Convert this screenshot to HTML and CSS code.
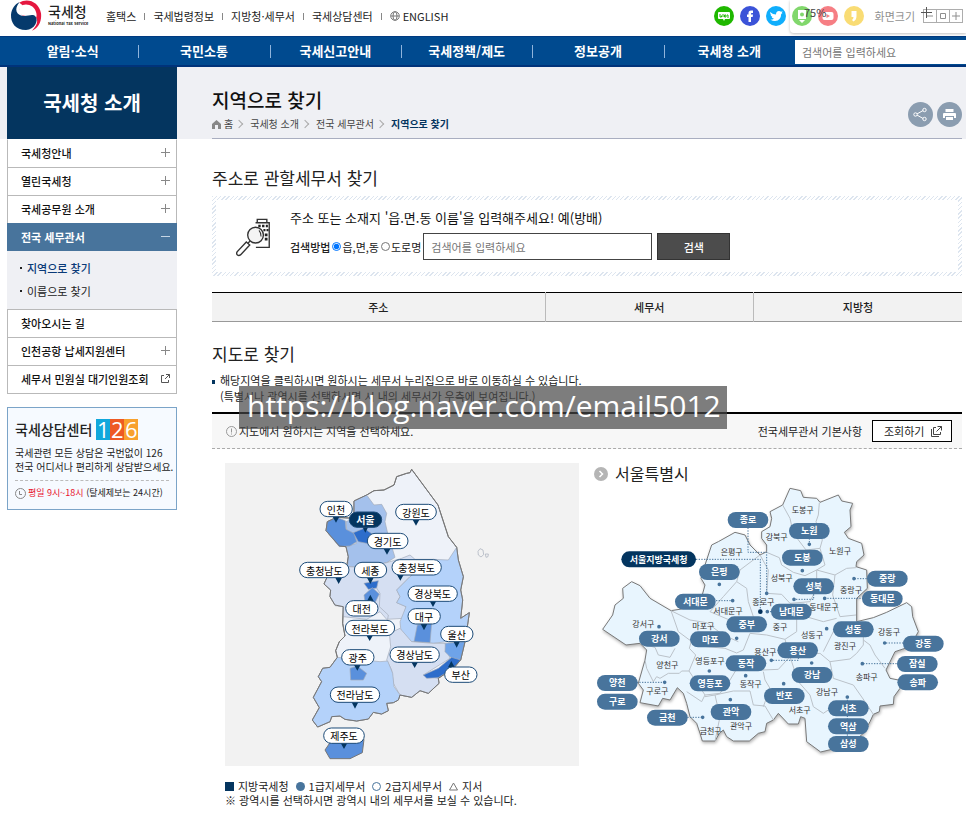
FILE: index.html
```html
<!DOCTYPE html>
<html lang="ko">
<head>
<meta charset="utf-8">
<meta name="viewport" content="width=device-width, initial-scale=1">
<title>지역으로 찾기 | 국세청</title>
<link rel="stylesheet" href="styles.css">
</head>
<body>
<header class="top">
  <a class="logo" href="#">
    <svg width="32" height="32" viewBox="0 0 96 96" aria-hidden="true">
      <path fill="#e5173f" d="M28 8C52-8 88 6 93 40C96 66 84 84 66 92C82 76 86 62 76 50C64 38 52 50 42 48C26 44 24 26 38 16Z"/>
      <path fill="#fff" d="M30 20C46 6 74 16 78 36C84 52 74 64 66 60C54 42 32 52 26 36Z"/>
      <path fill="#063a6c" d="M29 6C10 28 20 46 40 48C56 49 68 40 77 50C86 62 74 88 48 90C16 90 2 68 3 44C5 26 14 13 29 6Z"/>
    </svg>
    <span class="logo-text"><strong>국세청</strong><small>National Tax Service</small></span>
  </a>
  <ul class="util">
    <li><a href="#">홈택스</a></li>
    <li><a href="#">국세법령정보</a></li>
    <li><a href="#">지방청·세무서</a></li>
    <li><a href="#">국세상담센터</a></li>
    <li><a href="#"><svg width="10" height="10" viewBox="0 0 10 10" fill="none" stroke="#777"><circle cx="5" cy="5" r="4.3"/><ellipse cx="5" cy="5" rx="2" ry="4.3"/><path d="M1 5h8"/></svg>ENGLISH</a></li>
  </ul>
  <div class="sns">
    <a href="#" aria-label="블로그"><svg viewBox="0 0 20 20"><circle cx="10" cy="10" r="10" fill="#1fb800"/><path fill="#fff" d="M5 6h10q1 0 1 1v5q0 1-1 1h-4l-1 2-1-2H5q-1 0-1-1V7q0-1 1-1z"/><path stroke="#1fb800" fill="none" d="M6 8v3h1.500V9.500M9 8v3M10.500 9h1.500v2h-1.500zM13 9h1v3"/></svg></a>
    <a href="#" aria-label="페이스북"><svg viewBox="0 0 20 20"><circle cx="10" cy="10" r="10" fill="#3b53d8"/><path fill="#fff" d="M8.500 16V11H7V8.500h1.500V7q0-2.500 2.500-2.500h2V7h-1.300q-.7 0-.7.7v.8h2L12.700 11H11v5z"/></svg></a>
    <a href="#" aria-label="트위터"><svg viewBox="0 0 20 20"><circle cx="10" cy="10" r="10" fill="#10aefc"/><path fill="#fff" d="M4 6q3 2.500 6 2.500 0-3.500 3-3.500 1.300 0 2 .8l1.700-.5-1 1.400.8.2-1.300 1.100Q15 14.500 9 15q-2.500 0-4.500-1.200 2 0 3.500-1-2-.3-2.500-2h1Q4.500 10 4.500 8.300l1 .2Q3.700 7.500 4 6z"/></svg></a>
    <a href="#" aria-label="포스트"><svg viewBox="0 0 20 20"><circle cx="10" cy="10" r="10" fill="#2dbd0b"/><path fill="#fff" d="M6 4h8v9H6zM7 14h6l-3 3z"/><circle cx="10" cy="8.500" r="2" fill="#2dbd0b"/></svg></a>
    <a href="#" aria-label="유튜브"><svg viewBox="0 0 20 20"><circle cx="10" cy="10" r="10" fill="#f02932"/><rect x="4.500" y="6" width="11" height="8" rx="2" fill="#fff"/><path fill="#f02932" d="M8.500 8l3.500 2-3.500 2z"/></svg></a>
    <a href="#" aria-label="카카오스토리"><svg viewBox="0 0 20 20"><circle cx="10" cy="10" r="10" fill="#f5c518"/><path fill="#fff" d="M7.500 5h5v5q0 4-3 5.500L8 14q1.500-1 1.500-3h-2z"/></svg></a>
  </div>
  <div class="zoom-tools">
    <span>화면크기</span>
    <button type="button" aria-label="축소"><svg viewBox="0 0 12 12"><path d="M3 6h6"/></svg></button><button type="button" aria-label="기본"><svg viewBox="0 0 12 12"><path d="M3.500 3.500h5v5h-5z"/></svg></button><button type="button" aria-label="확대"><svg viewBox="0 0 12 12"><path d="M2 6h8M6 2v8"/></svg></button>
  </div>
  <div class="zoom-tip"><span>75%</span><svg width="12" height="12" viewBox="0 0 12 12" fill="none" stroke="#555"><path d="M0 5.500h11M5.500 0v11"/></svg></div>
</header>

<nav class="gnb">
  <ul>
    <li><a href="#">알림·소식</a></li>
    <li><a href="#">국민소통</a></li>
    <li><a href="#">국세신고안내</a></li>
    <li><a href="#">국세정책/제도</a></li>
    <li><a href="#">정보공개</a></li>
    <li><a href="#">국세청 소개</a></li>
  </ul>
  <input type="search" aria-label="통합검색" placeholder="검색어를 입력하세요">
</nav>

<div class="page">
  <aside class="side">
    <h2 class="side-title">국세청 소개</h2>
    <ul class="lnb">
      <li><a href="#">국세청안내<i class="plus"></i></a></li>
      <li><a href="#">열린국세청<i class="plus"></i></a></li>
      <li><a href="#">국세공무원 소개<i class="plus"></i></a></li>
      <li class="on"><a href="#">전국 세무관서<i class="minus"></i></a>
        <ul class="sub">
          <li><a class="cur" href="#">지역으로 찾기</a></li>
          <li><a href="#">이름으로 찾기</a></li>
        </ul>
      </li>
      <li><a href="#">찾아오시는 길</a></li>
      <li><a href="#">인천공항 납세지원센터<i class="plus"></i></a></li>
      <li><a href="#">세무서 민원실 대기인원조회<svg width="9" height="9" viewBox="0 0 9 9" fill="none" stroke="#555"><path d="M3 1.500H.5v7h7V6M5 .5h3.500V4M8.500.5L4 5"/></svg></a></li>
    </ul>
    <section class="call">
      <h3>국세상담센터
        <span class="n126"><b>1</b><b>2</b><b>6</b></span>
      </h3>
      <p>국세관련 모든 상담은 국번없이 126<br>전국 어디서나 편리하게 상담받으세요.</p>
      <p class="hours"><svg width="11" height="11" viewBox="0 0 11 11" fill="none" stroke="#888"><circle cx="5.500" cy="5.500" r="5"/><path d="M4.500 3v3.500H7"/></svg><span><em>평일 9시~18시</em> (탈세제보는 24시간)</span></p>
    </section>
  </aside>

  <main>
    <div class="head">
      <div>
        <h1>지역으로 찾기</h1>
        <ol class="crumb">
          <li><svg width="9" height="9" viewBox="0 0 9 9"><path fill="#888" d="M4.500 0L9 4v5H6V5H3v4H0V4z"/></svg>홈</li>
          <li>국세청 소개</li>
          <li>전국 세무관서</li>
          <li class="here">지역으로 찾기</li>
        </ol>
      </div>
      <div class="tools">
        <button type="button" aria-label="공유"><svg viewBox="0 0 25 25" fill="none" stroke="#fff"><path d="M8 12.500l8-4.500M8 12.500l8 4.500"/><circle cx="7.500" cy="12.500" r="1.700" fill="#8b9db0"/><circle cx="16.500" cy="8" r="1.700" fill="#8b9db0"/><circle cx="16.500" cy="17" r="1.700" fill="#8b9db0"/></svg></button>
        <button type="button" aria-label="인쇄"><svg viewBox="0 0 25 25" fill="#fff"><path d="M8.500 7h8v3h-8zM7 11h11q1 0 1 1v4h-2v-2H8v2H6v-4q0-1 1-1zM9 15h7v3H9z"/></svg></button>
      </div>
    </div>

    <h2>주소로 관할세무서 찾기</h2>
    <div class="finder">
      <svg class="finder-icon" viewBox="0 0 102 114" fill="none" stroke="#333" stroke-width="4">
        <path d="M57 14h40v72H58M62 14V4h28v10"/>
        <g fill="#222" stroke="none"><path d="M65 20h7v7h-7zM76 20h7v7h-7zM87 20h6v7h-6zM80 32h6v7h-6zM89 32h6v7h-6zM84 45h8v8h-8zM84 58h8v8h-8z"/></g>
        <circle cx="57" cy="50" r="23" fill="#f4f4f4"/><path stroke-width="3" d="M67 36q7 8 6 18"/>
        <path fill="#fff" d="M30 70l10 9-27 29q-5 3-9 0t-1-9z"/><path d="M35 74l6-7"/>
      </svg>
      <form class="finder-form">
        <p>주소 또는 소재지 '읍.면.동 이름'을 입력해주세요! 예(방배)</p>
        <div class="row">
          <strong>검색방법</strong>
          <label><input type="radio" name="how" checked>읍,면,동</label>
          <label><input type="radio" name="how">도로명</label>
          <input class="q" type="text" aria-label="검색어" placeholder="검색어를 입력하세요">
          <button type="submit">검색</button>
        </div>
      </form>
    </div>

    <table>
      <colgroup><col class="c1"><col class="c2"><col class="c2"></colgroup>
      <thead><tr><th scope="col">주소</th><th scope="col">세무서</th><th scope="col">지방청</th></tr></thead>
    </table>

    <h2 class="by-map">지도로 찾기</h2>
    <div class="guide">
      <p>해당지역을 클릭하시면 원하시는 세무서 누리집으로 바로 이동하실 수 있습니다.<br>(특별시나 광역시를 선택하시면 시 내의 세무서가 우측에 보여집니다.)</p>
      <div class="watermark">https://blog.naver.com/email5012</div>
    </div>
    <div class="bar">
      <span class="tip"><svg width="11" height="11" viewBox="0 0 11 11" fill="none" stroke="#999"><circle cx="5.500" cy="5.500" r="5"/><path d="M5.500 2.500v4M5.500 7.500v1"/></svg>지도에서 원하시는 지역을 선택하세요.</span>
      <span>전국세무관서 기본사항</span>
      <a class="go" href="#">조회하기<svg width="13" height="13" viewBox="0 0 13 13" fill="none" stroke="#444"><path d="M6 2.500H3.500v7h7V7M7.500 1.500h4v4M11.500 1.500L6.500 6.500M1.500 4v7.500H9"/></svg></a>
    </div>

    <div class="maps">
      <section class="korea">
        <svg class="map" viewBox="15 9 1062 909" role="group" aria-label="전국 지도">
          <defs>
            <rect id="k2" x="-48" y="-23" width="97" height="46" rx="23"/>
            <rect id="k3" x="-61" y="-23" width="122" height="46" rx="23"/>
            <rect id="k4" x="-74" y="-23" width="148" height="46" rx="23"/>
          </defs>
          <g class="land">
            <path class="coast" d="M575 28L654 135 685 230 710 262 715 300 730 350 722 390 728 420 722 475 748 458 742 500 735 545 722 600 700 625 655 655 657 670 625 700 600 692 575 712 540 705 535 720 520 728 500 730 505 752 485 762 460 757 445 777 410 783 375 778 360 768 335 770 330 785 293 801 277 780 298 743 280 712 305 665 295 650 308 625 330 622 352 592 347 572 358 545 375 528 368 490 370 440 345 435 330 410 332 390 312 372 322 350 380 320 385 290 378 260 358 258 318 212 322 185 350 172 402 175 402 123 440 105 462 92 492 90 522 75 530 50 560 40 570 38Z"/>
            <path fill="#a4c1ec" d="M402 123L440 105 462 135 485 133 500 160 495 185 503 220 525 292 500 308 430 322 383 320 385 290 378 260 410 250 380 210 378 185 402 175Z"/>
            <path fill="#5a90dc" d="M318 212L322 185 350 172 376 182 378 208 402 220 410 245 390 258 358 260Z"/>
            <path fill="#2d6dcb" d="M400 218L432 205 457 222 450 252 415 245Z"/>
            <path fill="#d5dff2" d="M383 320L430 322 500 308 545 295 570 285 585 298 640 298 570 350 530 390 540 410 530 428 558 440 550 475 500 478 480 455 440 478 370 470 368 440 345 437 330 410 332 390 312 372 322 350Z"/>
            <path fill="none" d="M470 384L480 400 478 440 505 465 503 478"/>
            <path fill="#b4d2fa" d="M710 262L685 300 640 298 570 350 530 390 540 410 530 428 558 440 540 485 543 515 575 545 640 550 680 545 735 545 748 458 722 475 728 420 722 390 730 350 715 300Z"/>
            <path fill="#5a90dc" d="M592 495L635 490 630 548 582 545Z"/>
            <path fill="#d5dff2" d="M508 520L540 505 575 545 640 550 675 550 690 595 610 645 655 655 657 670 625 700 600 692 575 712 540 705 520 670 515 630 500 600 512 560Z"/>
            <path fill="#6ea3e9" d="M676 550L735 545 722 600 695 595 675 575Z"/>
            <path fill="#2d6dcb" d="M610 645L655 625 695 592 722 600 700 625 655 653 620 655Z"/>
            <path fill="#b4d2fa" d="M352 592L480 605 503 603 518 640 522 680 540 705 535 720 520 728 500 730 505 752 485 762 460 757 445 777 410 783 375 778 360 768 335 770 330 785 293 801 277 780 298 743 280 712 305 665 295 650 308 625 330 622Z"/>
            <path fill="#5a90dc" d="M390 625L412 618 440 640 430 660 392 660Z"/>
            <path fill="#2d6dcb" d="M432 370L475 362 470 384 445 388Z"/>
            <path fill="#5a90dc" d="M432 405L457 383 478 402 465 428 435 425Z"/>
            <path class="coast jeju" d="M315 870L330 848 432 838 427 878 390 896 330 896Z"/>
            <path class="coast outline" d="M575 28L654 135 685 230 710 262 715 300 730 350 722 390 728 420 722 475 748 458 742 500 735 545 722 600 700 625 655 655 657 670 625 700 600 692 575 712 540 705 535 720 520 728 500 730 505 752 485 762 460 757 445 777 410 783 375 778 360 768 335 770 330 785 293 801 277 780 298 743 280 712 305 665 295 650 308 625 330 622 352 592 347 572 358 545 375 528 368 490 370 440 345 435 330 410 332 390 312 372 322 350 380 320 385 290 378 260 358 258 318 212 322 185 350 172 402 175 402 123 440 105 462 92 492 90 522 75 530 50 560 40 570 38Z"/>
            <path fill="#f2f2f2" d="M774 274l6-8 9 4 2 14-8 7-8-6zM796 282h9l-1 8-6 2z"/>
          </g>
          <path class="tails" d="M338 170h20l-10 18zM426 198h20l-10 20zM491 266h20l-10 18zM578 179h20l-10 18zM346 353h20l-10 19zM441 353h20l-10 19zM531 344h20l-10 18zM629 423h20l-10 18zM441 423h20l-10-19zM602 492h20l-10 19zM439 526h20l-10 17zM700 544h20l-10 19zM402 614h20l-10 18zM574 606h20l-10 18zM684 622h20l-10-19zM395 727h20l-10 19zM362 849h20l-10 18z"/>
          <g class="pins">
            <a href="#" transform="translate(348 147)"><use href="#k2"/><text>인천</text></a>
            <a href="#" class="cur" transform="translate(436 179)"><use href="#k2"/><text>서울</text></a>
            <a href="#" transform="translate(503 243)"><use href="#k3"/><text>경기도</text></a>
            <a href="#" transform="translate(588 156)"><use href="#k3"/><text>강원도</text></a>
            <a href="#" transform="translate(313 330)"><use href="#k4"/><text>충청남도</text></a>
            <a href="#" transform="translate(451 330)"><use href="#k2"/><text>세종</text></a>
            <a href="#" transform="translate(590 322)"><use href="#k4"/><text>충청북도</text></a>
            <a href="#" transform="translate(638 401)"><use href="#k4"/><text>경상북도</text></a>
            <a href="#" transform="translate(425 445)"><use href="#k2"/><text>대전</text></a>
            <a href="#" transform="translate(612 469)"><use href="#k2"/><text>대구</text></a>
            <a href="#" transform="translate(450 504)"><use href="#k4"/><text>전라북도</text></a>
            <a href="#" transform="translate(710 522)"><use href="#k2"/><text>울산</text></a>
            <a href="#" transform="translate(413 592)"><use href="#k2"/><text>광주</text></a>
            <a href="#" transform="translate(584 584)"><use href="#k4"/><text>경상남도</text></a>
            <a href="#" transform="translate(722 644)"><use href="#k2"/><text>부산</text></a>
            <a href="#" transform="translate(405 704)"><use href="#k4"/><text>전라남도</text></a>
            <a href="#" transform="translate(372 827)"><use href="#k3"/><text>제주도</text></a>
          </g>
        </svg>
        <ul class="legend">
          <li><i class="sq"></i>지방국세청</li>
          <li><i class="dot"></i>1급지세무서</li>
          <li><i class="ring"></i>2급지세무서</li>
          <li><svg width="9" height="9" viewBox="0 0 9 9" fill="none" stroke="#777"><path d="M4.500 1L8.500 8h-8z"/></svg>지서</li>
        </ul>
        <p class="note">※ 광역시를 선택하시면 광역시 내의 세무서를 보실 수 있습니다.</p>
      </section>

      <section class="seoul">
        <h3><svg width="14" height="14" viewBox="0 0 14 14"><circle cx="7" cy="7" r="7" fill="#b5b5b5"/><path d="M5.500 4l3 3-3 3" fill="none" stroke="#fff" stroke-width="1.500"/></svg>서울특별시</h3>
        <svg class="map" viewBox="0 84 1116 820" role="group" aria-label="서울 지도">
          <defs><rect id="s" x="-61" y="-24" width="122" height="48" rx="24"/></defs>
          <path class="city" d="M600 100L632 107 640 127 680 130 690 142 745 120 755 138 788 145 780 165 783 215 763 232 775 250 815 265 822 300 800 320 798 335 830 345 832 400 800 430 800 500 850 488 890 472 950 443 965 455 968 485 985 530 960 575 915 590 888 645 900 670 925 675 930 700 912 725 910 748 870 753 868 770 850 778 840 800 820 835 780 870 692 891 650 860 645 790 632 785 625 807 595 807 565 775 550 795 530 805 525 830 505 835 478 858 430 858 410 845 400 825 388 835 375 858 337 858 330 835 320 805 300 785 290 745 280 715 262 698 240 735 218 730 205 753 150 743 160 705 145 685 165 615 170 585 150 565 108 570 38 523 68 480 75 450 100 430 98 400 125 380 150 392 180 430 243 467 275 462 330 445 345 390 333 370 345 330 355 300 365 270 385 260 435 232 465 240 480 270 510 300 530 290 530 270 515 250 515 230 540 215 545 190 540 170 578 150Z"/>
          <path class="gu" d="M578 150L600 190 610 235 648 285 690 280M688 143L685 180 678 200 697 255 690 280 705 330 680 345M530 292L568 308 575 330 610 352 645 362 680 345 735 360 770 340 798 338M510 300L450 345 440 380 400 425 360 470 430 500M510 300L535 345 530 415 575 418 600 445 660 440 680 400 680 345M440 380L470 400 475 440 490 485M735 360L728 420 750 485 798 480M650 445L655 487 700 500 740 490M243 467L300 495 350 503 400 540 445 560M243 467L265 530 300 556 320 572 405 580 440 594 460 585 480 535 530 540 585 553 620 530 620 490 600 470M165 570L195 577 205 600 240 607 255 580M305 555L298 580 317 600 297 648 275 648 268 655 235 655 210 670 200 665 190 680 170 640 165 615M297 648L345 720 335 740 290 710M345 720L390 715 420 675 440 642 520 645 565 643 600 605M345 725L375 720 430 708 480 708 490 750 525 753 550 795M520 650L525 675 540 700 520 755M600 605L625 680 660 720 670 755 700 775 715 765M585 553L600 605 640 600 690 595 720 620 730 670 790 690 825 740 850 778M720 620L780 612 800 595 820 570 820 530 800 500M735 520L700 590M820 555L840 570 855 600 885 640M375 720L390 785 375 858"/>
          <path class="lead" d="M474 218V292H530V415M318 313H511V470M671 418V433H612M830 371H792M378 437H428M820 430H704M532 470H550M658 250V268M625 608V616H544M940 564H884M920 626H817M140 682H224M292 787H338M772 726V860"/>
          <path class="spots" d="M530 415h0M658 268h0M637 347h0M388 388h0M612 433h0M792 371h0M428 437h0M704 430h0M532 470h0M710 521h0M207 515h0M440 550h0M544 616h0M884 564h0M817 626h0M224 682h0M665 624h0M467 662h0M358 648h0M581 686h0M772 726h0M421 734h0M338 787h0"/>
          <circle cx="511" cy="470" r="7" fill="#02305b"/>
          <g class="names">
            <text x="638" y="164">도봉구</text><text x="560" y="244">강북구</text><text x="750" y="288">노원구</text>
            <text x="425" y="291">은평구</text><text x="575" y="367">성북구</text><text x="783" y="405">중랑구</text>
            <text x="520" y="440">종로구</text><text x="414" y="467">서대문구</text><text x="702" y="455">동대문구</text>
            <text x="160" y="506">강서구</text><text x="340" y="511">마포구</text><text x="570" y="516">중구</text>
            <text x="666" y="538">성동구</text><text x="897" y="531">강동구</text><text x="765" y="573">광진구</text>
            <text x="526" y="589">용산구</text><text x="232" y="628">양천구</text><text x="360" y="616">영등포구</text>
            <text x="830" y="665">송파구</text><text x="202" y="707">구로구</text><text x="482" y="686">동작구</text>
            <text x="711" y="710">강남구</text><text x="629" y="765">서초구</text><text x="362" y="826">금천구</text>
            <text x="453" y="811">관악구</text>
          </g>
          <g class="offices">
            <a href="#" transform="translate(474 195)"><use href="#s"/><text>종로</text></a>
            <a href="#" transform="translate(658 228)"><use href="#s"/><text>노원</text></a>
            <a href="#" class="cur" transform="translate(206 313)"><rect x="-112" y="-24" width="224" height="48" rx="24"/><text>서울지방국세청</text></a>
            <a href="#" transform="translate(637 308)"><use href="#s"/><text>도봉</text></a>
            <a href="#" transform="translate(388 351)"><use href="#s"/><text>은평</text></a>
            <a href="#" transform="translate(671 394)"><use href="#s"/><text>성북</text></a>
            <a href="#" transform="translate(892 371)"><use href="#s"/><text>중랑</text></a>
            <a href="#" transform="translate(316 440)"><use href="#s"/><text>서대문</text></a>
            <a href="#" transform="translate(877 431)"><use href="#s"/><text>동대문</text></a>
            <a href="#" transform="translate(604 470)"><use href="#s"/><text>남대문</text></a>
            <a href="#" transform="translate(470 508)"><use href="#s"/><text>중부</text></a>
            <a href="#" transform="translate(790 523)"><use href="#s"/><text>성동</text></a>
            <a href="#" transform="translate(208 551)"><use href="#s"/><text>강서</text></a>
            <a href="#" transform="translate(361 553)"><use href="#s"/><text>마포</text></a>
            <a href="#" transform="translate(623 586)"><use href="#s"/><text>용산</text></a>
            <a href="#" transform="translate(1000 566)"><use href="#s"/><text>강동</text></a>
            <a href="#" transform="translate(468 625)"><use href="#s"/><text>동작</text></a>
            <a href="#" transform="translate(666 660)"><use href="#s"/><text>강남</text></a>
            <a href="#" transform="translate(982 627)"><use href="#s"/><text>잠실</text></a>
            <a href="#" transform="translate(983 682)"><use href="#s"/><text>송파</text></a>
            <a href="#" transform="translate(82 684)"><use href="#s"/><text>양천</text></a>
            <a href="#" transform="translate(82 740)"><use href="#s"/><text>구로</text></a>
            <a href="#" transform="translate(360 685)"><use href="#s"/><text>영등포</text></a>
            <a href="#" transform="translate(583 723)"><use href="#s"/><text>반포</text></a>
            <a href="#" transform="translate(775 760)"><use href="#s"/><text>서초</text></a>
            <a href="#" transform="translate(775 814)"><use href="#s"/><text>역삼</text></a>
            <a href="#" transform="translate(775 867)"><use href="#s"/><text>삼성</text></a>
            <a href="#" transform="translate(423 771)"><use href="#s"/><text>관악</text></a>
            <a href="#" transform="translate(232 788)"><use href="#s"/><text>금천</text></a>
          </g>
        </svg>
      </section>
    </div>
  </main>
</div>
</body>
</html>
```
FILE: styles.css
```css
* { box-sizing: border-box; }
body {
  margin: 0;
  background: #fff;
  color: #222;
  font: 11px/16px "Noto Sans CJK KR", "Noto Sans", sans-serif;
  overflow-x: hidden;
}
a { color: inherit; text-decoration: none; }
ul, ol { list-style: none; margin: 0; padding: 0; }
h1, h2, h3, p { margin: 0; font-weight: 400; }
button, input { font: inherit; color: inherit; }
button { padding: 0; }
svg { flex: none; }

/* top bar */
.top { position: relative; display: flex; align-items: center; height: 36px; padding: 0 4px 4px 10px; white-space: nowrap; }
.logo { display: flex; align-items: center; gap: 6px; width: 84px; }
.logo-text { display: flex; flex-direction: column; margin-top: -4px; }
.logo-text strong { font-size: 14px; line-height: 18px; font-weight: 500; }
.logo-text small { font-size: 4px; line-height: 6px; font-weight: 700; }
.util { display: flex; }
.util li { display: flex; align-items: center; }
.util li + li::before { content: ""; width: 1px; height: 7px; margin: 0 8px; background: #888; }
.util li:first-child { margin-left: 12px; }
.util a { display: flex; align-items: center; gap: 3px; }
.sns { display: flex; gap: 6px; margin-left: auto; }
.sns a, .sns svg { display: block; width: 20px; height: 20px; }
.zoom-tools { display: flex; align-items: center; margin-left: 11px; color: #444; }
.zoom-tools span { margin-right: 8px; }
.zoom-tools button { width: 14px; height: 14px; margin-right: -1px; border: 1px solid #777; background: #fff; }
.zoom-tools svg { display: block; fill: none; stroke: #444; }
.zoom-tip {
  position: absolute; right: 0; top: 0; width: 176px; height: 33px; padding: 4px 33px 0 14px;
  display: flex; justify-content: space-between; color: #444;
  background: rgba(255, 255, 255, .4); border-radius: 0 0 0 4px; box-shadow: 0 1px 3px rgba(0, 0, 0, .25);
}
.zoom-tip svg { margin-top: 3px; }

/* main menu */
.gnb { display: flex; height: 31px; padding-left: 7px; background: #004a8f; border-top: 1px solid #003a80; border-bottom: 2px solid #00337a; }
.gnb ul { flex: 1; display: flex; }
.gnb li { flex: 1; display: flex; align-items: center; justify-content: center; position: relative; }
.gnb li + li::before { content: ""; position: absolute; left: 0; top: 8px; width: 1px; height: 13px; background: #8fb4dc; }
.gnb a { color: #fff; font-size: 13px; font-weight: 700; }
.gnb input { width: 171px; height: 24px; margin-top: 3px; padding: 0 7px; border: 0; border-radius: 0; background: #fff; }
input::placeholder { color: #757575; opacity: 1; }

/* page frame */
.page { display: flex; gap: 35px; padding: 0 4px 0 7px; background: linear-gradient(#eff0f4, #eff0f4) 0 0 / 100% 72px no-repeat; }
.side { flex: none; width: 170px; }
main { flex: 1; min-width: 0; }

/* side menu */
.side-title { height: 72px; background: #04355f; color: #fff; font-size: 20px; line-height: 72px; font-weight: 700; text-align: center; }
.lnb { border-bottom: 1px solid #b9b9b9; }
.lnb > li > a { display: flex; align-items: center; justify-content: space-between; height: 28px; padding: 0 6px 2px 13px; border: 1px solid #b9b9b9; border-bottom: 0; font-weight: 500; color: #111; }
.lnb > li:first-child > a { border-top-color: #fff; }
.lnb > .on > a { background: #48749c; border-color: #48749c; color: #fff; font-weight: 700; }
.plus, .minus { width: 9px; height: 9px; background: linear-gradient(#888, #888) 0 4px / 9px 1px no-repeat, linear-gradient(#888, #888) 4px 0 / 1px 9px no-repeat; }
.minus { background: linear-gradient(#c5d5e5, #c5d5e5) 0 4px / 9px 1px no-repeat; }
.sub { padding: 5px 0 7px 13px; background: #eff0f4; }
.sub li { display: flex; align-items: center; gap: 5px; height: 23px; }
.sub li::before { content: ""; width: 2px; height: 2px; background: #222; }
.sub .cur { color: #0a3a78; font-weight: 500; }

.call { margin-top: 13px; padding: 9px 7px 9px; border: 1px solid #7ba4c8; background: #f6faff; font-size: 10px; line-height: 14px; white-space: nowrap; }
.call h3 { display: flex; align-items: center; gap: 4px; margin-bottom: 5px; font-size: 14px; line-height: 24px; font-weight: 500; }
.n126 { display: flex; color: #fff; font: 22px/21px "Open Sans", sans-serif; }
.n126 b { width: 14px; height: 21px; font-weight: 400; text-align: center; }
.n126 b:nth-child(1) { background: #10a8dc; }
.n126 b:nth-child(2) { background: #ee5a24; }
.n126 b:nth-child(3) { background: #f8a12d; }
.hours { display: flex; align-items: center; gap: 2px; margin-top: 6px; padding-top: 5px; border-top: 1px dashed #bbb; font-size: 9px; }
.hours em { color: #e8112d; font-style: normal; }

/* heading */
.head { display: flex; justify-content: space-between; height: 72px; padding-top: 20px; border-bottom: 1px solid #a9aec0; }
h1 { font-size: 19px; line-height: 26px; font-weight: 500; color: #111; }
.crumb { display: flex; margin-top: 3px; font-size: 10px; color: #444; }
.crumb li { display: flex; align-items: center; gap: 3px; }
.crumb li + li::before { content: ""; width: 5px; height: 5px; margin: 0 5px 0 3px; border: solid #aaa; border-width: 1px 1px 0 0; transform: rotate(45deg); }
.crumb .here { color: #04355f; font-weight: 700; }
.tools { display: flex; gap: 4px; padding-top: 15px; }
.tools button { width: 25px; height: 25px; border: 0; border-radius: 50%; background: #8b9db0; }
.tools svg { display: block; }

main h2 { margin-top: 26px; font-size: 17px; line-height: 26px; }
.finder {
  display: flex; align-items: flex-start; height: 80px; margin-top: 5px; padding: 8px 20px;
  border: 4px solid transparent;
  background: linear-gradient(#fff, #fff) padding-box, repeating-linear-gradient(135deg, #dde5ef 0 1px, #fff 1px 3px) border-box;
}
.finder-icon { width: 35px; height: 39px; margin: 10px 19px 0 0; }
.finder-form { flex: 1; }
.finder-form p { font-size: 13px; line-height: 20px; color: #111; }
.row { display: flex; align-items: center; margin-top: 5px; white-space: nowrap; }
.row strong { font-weight: 500; margin-right: 2px; }
.row label { display: flex; align-items: center; gap: 1px; margin-right: 2px; }
.row input[type="radio"] { width: 9px; height: 9px; margin: 0; }
.q { flex: 0 1 229px; height: 27px; min-width: 80px; margin-right: 5px; padding: 0 7px; border: 1px solid #444; border-radius: 0; }
.row button { width: 73px; height: 27px; border: 1px solid #333; background: #4c4c4c; color: #fff; font-weight: 500; }

table { width: 100%; margin-top: 16px; border-collapse: collapse; table-layout: fixed; border-top: 1px solid #000; border-bottom: 1px solid #999; }
.c1 { width: 44.4%; }
.c2 { width: 27.8%; }
th { height: 29px; padding: 0; background: #f2f2f2; font-weight: 500; }
th + th { border-left: 1px solid #bbb; }

main .by-map { margin-top: 19px; }
.guide { position: relative; margin-top: 5px; padding: 0 0 8px 8px; }
.guide::before { content: ""; position: absolute; left: 0; top: 8px; width: 3px; height: 4px; background: #04355f; }
.watermark {
  position: absolute; z-index: 2; left: 27px; top: 14px; padding: 0 6px 0 8px; height: 43px;
  background: rgba(70, 70, 70, .7); color: #fff; font: 30px/40px "Open Sans", "Noto Sans", sans-serif; white-space: nowrap;
}
.bar { display: flex; align-items: center; height: 37px; padding: 0 10px 0 14px; border-top: 2px solid #000; border-bottom: 1px dashed #aaa; background: #f7f7f7; }
.tip { display: flex; align-items: center; gap: 2px; margin-right: auto; }
.go { display: flex; align-items: center; justify-content: space-between; width: 80px; height: 22px; margin-left: 10px; padding: 0 8px 0 11px; border: 1px solid #000; background: #fff; }

/* maps */
.maps { display: flex; gap: 11px; padding: 14px 0 8px 13px; }
.korea { flex: 354; min-width: 0; }
.seoul { flex: 372; min-width: 0; }
.map { display: block; width: 100%; height: auto; }
.map text { text-anchor: middle; dominant-baseline: central; font-size: 30px; }
.korea .map { background: #f2f2f2; }
.land path { stroke: #a3abb8; stroke-width: 2; }
.land .coast { fill: #eef2f9; stroke: #777; stroke-width: 3; stroke-linejoin: round; }
.land .jeju { fill: #5a90dc; }
.land .outline { fill: none; }
.tails { fill: #04355f; }
.pins use { fill: #fff; stroke: #1c4b78; stroke-width: 3; }
.pins .cur use { fill: #04355f; }
.pins .cur text { fill: #fff; font-weight: 700; }
.legend { display: flex; gap: 7px; margin-top: 13px; white-space: nowrap; line-height: 14px; }
.legend li { display: flex; align-items: center; gap: 4px; }
.legend i { width: 9px; height: 9px; }
.sq { background: #04355f; }
.dot { border-radius: 50%; background: #48749c; }
.ring { border: 1px solid #48749c; border-radius: 50%; }
.note { line-height: 14px; white-space: nowrap; }
.seoul h3 { display: flex; align-items: center; gap: 7px; margin-bottom: -1px; padding-left: 4px; font-size: 16px; line-height: 21px; }
.city { fill: #e8f5fe; stroke: #777; stroke-width: 3; stroke-linejoin: round; filter: drop-shadow(2px 5px 4px rgba(0, 0, 0, .3)); }
.gu { fill: none; stroke: #bbc2c9; stroke-width: 3; }
.lead { fill: none; stroke: #48749c; stroke-width: 3; stroke-dasharray: 4 4; }
.spots { fill: none; stroke: #48749c; stroke-width: 11; stroke-linecap: round; }
.names { fill: #333; }
.map .names text { font-size: 24px; }
.offices use { fill: #48749c; }
.offices rect { fill: #04355f; }
.offices text { fill: #fff; font-weight: 700; }
.map .offices text { font-size: 27px; }
```
